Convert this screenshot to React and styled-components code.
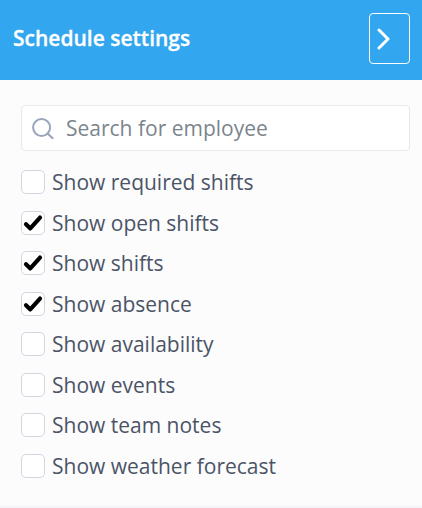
import React, { useState } from 'react';
import styled, { createGlobalStyle } from 'styled-components';

const GlobalStyle = createGlobalStyle`
  * { box-sizing: border-box; }
  body { margin: 0; background: #fcfcfc; font-family: "Open Sans", sans-serif; }
`;

const Panel = styled.section`
  height: 508px;
  display: flex;
  flex-direction: column;
  background: #fcfcfc;
`;

const Header = styled.header`
  height: 80px;
  flex: none;
  display: flex;
  justify-content: space-between;
  align-items: flex-start;
  padding: 13px 12px 0 13px;
  background: #32a6ef;
`;

const Title = styled.h1`
  margin: 0;
  color: #fff;
  font-size: 21px;
  font-weight: 600;
  line-height: 51px;
  -webkit-text-stroke: 0.3px #fff;
`;

const CollapseButton = styled.button`
  width: 41px;
  height: 51px;
  display: flex;
  align-items: center;
  padding: 0 0 0 7px;
  border: 1px solid #fff;
  border-radius: 4px;
  background: transparent;
`;

const Content = styled.div`
  height: 428px;
  padding: 25px 12px 0 21px;
  border-bottom: 2px solid #f3f3f8;
`;

const SearchBox = styled.label`
  height: 46px;
  display: flex;
  align-items: center;
  gap: 12px;
  padding-left: 10px;
  border: 1px solid #e9e9eb;
  border-radius: 4px;
  background: #fff;
`;

const SearchInput = styled.input`
  flex: 1;
  min-width: 0;
  padding: 0;
  border: 0;
  outline: 0;
  background: transparent;
  color: #374151;
  font: 400 21px/28px "Open Sans", sans-serif;
  &::placeholder { color: #7b858c; opacity: 1; }
`;

const Options = styled.div`
  display: flex;
  flex-direction: column;
  padding-top: 11px;
`;

const Option = styled.label`
  height: 40.5px;
  display: flex;
  align-items: center;
  gap: 7px;
  color: #4b5467;
  font-size: 21px;
  font-weight: 400;
  line-height: 28px;
`;

const Checkbox = styled.button`
  width: 24px;
  height: 24px;
  display: grid;
  place-items: center;
  padding: 0;
  border: 1px solid #d2d6e0;
  border-radius: 5px;
  background: #fff;
`;

const options = [
  ['Show required shifts', false],
  ['Show open shifts', true],
  ['Show shifts', true],
  ['Show absence', true],
  ['Show availability', false],
  ['Show events', false],
  ['Show team notes', false],
  ['Show weather forecast', false],
];

function SettingOption({ label, initial }) {
  const [checked, setChecked] = useState(initial);
  return (
    <Option>
      <Checkbox type="button" role="checkbox" aria-checked={checked} aria-label={label} onClick={() => setChecked(!checked)}>
        {checked && (
          <svg width="20" height="18" viewBox="0 0 20 18" fill="none">
            <path d="M3 10.3 7.3 14.4 17 3.6" stroke="#000" strokeWidth="4.2" strokeLinecap="round" strokeLinejoin="round" />
          </svg>
        )}
      </Checkbox>
      {label}
    </Option>
  );
}

export default function App() {
  return (
    <Panel>
      <GlobalStyle />
      <Header>
        <Title>Schedule settings</Title>
        <CollapseButton aria-label="Collapse">
          <svg width="14" height="22" viewBox="0 0 14 22" fill="none">
            <path d="M2 2 11 11 2 20" stroke="#fff" strokeWidth="3" strokeLinecap="round" strokeLinejoin="round" />
          </svg>
        </CollapseButton>
      </Header>
      <Content>
        <SearchBox>
          <svg width="22" height="22" viewBox="0 0 22 22" fill="none" stroke="#9aa5bb" strokeWidth="2" strokeLinecap="round">
            <circle cx="9.6" cy="10.5" r="8.5" />
            <path d="m15.8 16.7 4.8 4.6" />
          </svg>
          <SearchInput placeholder="Search for employee" />
        </SearchBox>
        <Options>
          {options.map(([label, initial]) => <SettingOption key={label} label={label} initial={initial} />)}
        </Options>
      </Content>
    </Panel>
  );
}
